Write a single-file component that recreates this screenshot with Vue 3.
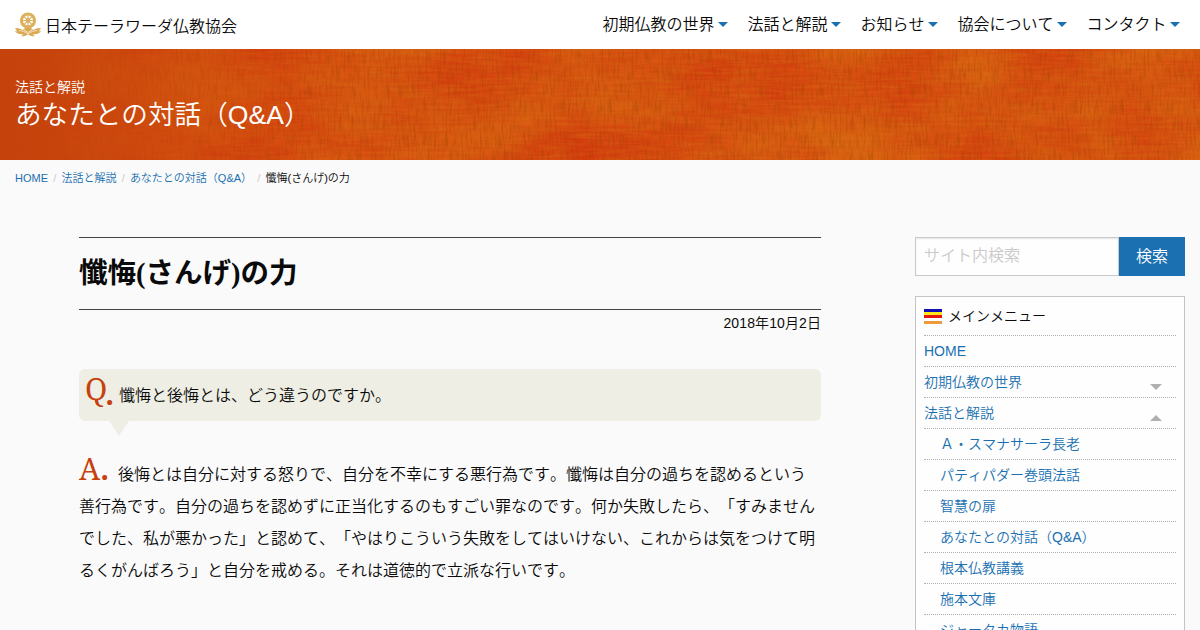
<template>
  <div class="page">
    <header class="top-bar">
      <a class="brand" href="#">
        <svg class="logo" width="28" height="26" viewBox="0 0 28 26">
          <g fill="none" stroke="#dcb05c">
            <circle cx="14" cy="8.5" r="6.6" stroke-width="3" />
            <circle cx="14" cy="8.5" r="1.6" stroke-width="1.6" />
            <path d="M14 2v13M7.5 8.5h13M9.4 3.9l9.2 9.2M18.6 3.9l-9.2 9.2" stroke-width="1.1" />
          </g>
          <path
            d="M1 16.4c3.4-.3 5.6.2 7.600 1.500 1.500-1.700 3-2 5.400-2s3.900.3 5.400 2c2-1.300 4.200-1.800 7.600-1.500-.7 1.300-1.600 2.200-2.800 2.900h3c-2.300 2.500-5.400 3.500-8.700 2.700l2.300 2.300c-2.500.2-4.800-.3-6.800-2-2 1.700-4.300 2.200-6.800 2l2.300-2.300C6.200 22.800 3.100 21.800.8 19.300h3C2.600 18.600 1.700 17.700 1 16.400z"
            fill="#d9a850"
          />
          <path d="M5 18.500c3.500.2 6 1.200 9 3.600 3-2.400 5.500-3.400 9-3.600M9.500 17.500l4.500 3 4.500-3" fill="none" stroke="#fff" stroke-width=".7" />
        </svg>
        <span>日本テーラワーダ仏教協会</span>
      </a>
      <nav class="nav">
        <a v-for="item in navItems" :key="item" class="nav-item" href="#">{{ item }}</a>
      </nav>
    </header>

    <section class="banner">
      <svg class="cloth" width="1200" height="111" preserveAspectRatio="none">
        <defs>
          <filter id="folds" x="0" y="0" width="100%" height="100%" color-interpolation-filters="sRGB">
            <feTurbulence type="fractalNoise" baseFrequency="0.009 0.014" numOctaves="4" seed="8" />
            <feColorMatrix values="0.03 0 0 0 0.825  0.26 0 0 0 0.185  0.02 0 0 0 0.05  0 0 0 0 1" />
          </filter>
          <filter id="warp" x="0" y="0" width="100%" height="100%" color-interpolation-filters="sRGB">
            <feTurbulence type="fractalNoise" baseFrequency="0.5 0.06" numOctaves="3" seed="3" />
            <feColorMatrix values="0 0 0 0 0.6  0 0 0 0 0.25  0 0 0 0 0  0.9 0 0 0 -0.38" />
          </filter>
          <filter id="weft" x="0" y="0" width="100%" height="100%" color-interpolation-filters="sRGB">
            <feTurbulence type="fractalNoise" baseFrequency="0.03 0.35" numOctaves="3" seed="12" />
            <feColorMatrix values="0 0 0 0 0.87  0 0 0 0 0.45  0 0 0 0 0.08  0.7 0 0 0 -0.22" />
          </filter>
          <linearGradient id="shade">
            <stop offset="0" stop-color="#c5420c" />
            <stop offset=".03" stop-color="#c5420c" stop-opacity=".95" />
            <stop offset=".3" stop-color="#d3440d" stop-opacity="0" />
          </linearGradient>
        </defs>
        <rect width="1200" height="111" filter="url(#folds)" />
        <rect width="1200" height="111" filter="url(#weft)" />
        <rect width="1200" height="111" filter="url(#warp)" />
        <rect width="1200" height="111" fill="url(#shade)" />
      </svg>
      <div class="banner-text">
        <p class="banner-sub">法話と解説</p>
        <p class="banner-title">あなたとの対話（Q&amp;A）</p>
      </div>
    </section>

    <ul class="breadcrumbs">
      <li v-for="crumb in crumbs" :key="crumb"><a href="#">{{ crumb }}</a></li>
      <li>懺悔(さんげ)の力</li>
    </ul>

    <div class="columns">
      <main class="article">
        <h1>懺悔(さんげ)の力</h1>
        <time class="date">2018年10月2日</time>
        <div class="question">
          <span class="mark mark-q">Q<i>.</i></span>
          <span>懺悔と後悔とは、どう違うのですか。</span>
        </div>
        <p class="answer"><span class="mark mark-a">A<i>.</i></span>後悔とは自分に対する怒りで、自分を不幸にする悪行為です。懺悔は自分の過ちを認めるという善行為です。自分の過ちを認めずに正当化するのもすごい罪なのです。何か失敗したら、「すみませんでした、私が悪かった」と認めて、「やはりこういう失敗をしてはいけない、これからは気をつけて明るくがんばろう」と自分を戒める。それは道徳的で立派な行いです。</p>
      </main>

      <aside class="side">
        <form class="search" @submit.prevent>
          <input v-model="keyword" type="text" placeholder="サイト内検索" />
          <button type="submit">検索</button>
        </form>
        <div class="menu">
          <div class="menu-title">
            <span class="flag"></span>
            <span>メインメニュー</span>
          </div>
          <a
            v-for="item in menuItems"
            :key="item.label"
            class="menu-item"
            :class="[{ sub: item.sub }, item.arrow]"
            href="#"
          >{{ item.label }}</a>
        </div>
      </aside>
    </div>
  </div>
</template>

<script setup>
import { ref } from 'vue';

const keyword = ref('');

const navItems = ['初期仏教の世界', '法話と解説', 'お知らせ', '協会について', 'コンタクト'];
const crumbs = ['HOME', '法話と解説', 'あなたとの対話（Q&A）'];

const menuItems = [
  { label: 'HOME' },
  { label: '初期仏教の世界', arrow: 'down' },
  { label: '法話と解説', arrow: 'up' },
  { label: 'Ａ・スマナサーラ長老', sub: true },
  { label: 'パティパダー巻頭法話', sub: true },
  { label: '智慧の扉', sub: true },
  { label: 'あなたとの対話（Q&A）', sub: true },
  { label: '根本仏教講義', sub: true },
  { label: '施本文庫', sub: true },
  { label: 'ジャータカ物語', sub: true },
];
</script>

<style>
html,
body {
  background: #fafafa;
  overflow: hidden;
}
</style>

<style scoped>
.page {
  box-sizing: border-box;
  height: 630px;
  overflow: hidden;
  color: #0a0a0a;
  font-family: "Liberation Sans", "Noto Sans CJK JP DemiLight", "Noto Sans CJK JP", sans-serif;
  font-size: 16px;
  font-kerning: none;
  text-spacing-trim: space-all;
}

.page * {
  box-sizing: border-box;
}

a {
  color: #1a70b1;
  text-decoration: none;
}

/* ヘッダー */
.top-bar {
  display: flex;
  justify-content: space-between;
  height: 49px;
  padding: 0 15px 0 14px;
  background: #fff;
}

.brand {
  display: flex;
  align-items: center;
  gap: 3px;
  height: 50px;
  color: #0a0a0a;
}

.nav {
  display: flex;
  align-items: center;
  height: 46px;
}

.nav-item {
  display: flex;
  align-items: center;
  padding-right: 5px;
  margin-left: 14.500px;
  color: #0a0a0a;
  white-space: nowrap;
}

.nav-item::after {
  content: "";
  margin: 2px 0 0 3.500px;
  border: 5.500px solid transparent;
  border-top-color: #1a70b1;
  border-bottom: 0;
}

/* バナー */
.banner {
  position: relative;
  height: 111px;
  background: #d34f10;
  color: #fff;
}

.cloth {
  position: absolute;
  inset: 0;
}

.banner-text {
  position: relative;
  padding: 28px 15px 0;
}

.banner p {
  margin: 0;
}

.banner-sub {
  font-size: 14px;
  line-height: 20px;
}

.banner-title {
  font-size: 26.600px;
  line-height: 37px;
}

/* パンくず */
.breadcrumbs {
  display: flex;
  height: 37px;
  margin: 0;
  padding: 0 15px;
  list-style: none;
  font-size: 11px;
  line-height: 36px;
}

.breadcrumbs li:not(:last-child)::after {
  content: "/";
  margin: 0 5.200px;
  color: #cacaca;
}

/* 本文 */
.columns {
  display: flex;
  justify-content: space-between;
  padding: 40px 15px 0 79px;
}

.article {
  width: 742px;
}

h1 {
  height: 73px;
  margin: 0;
  border-top: 1px solid #444;
  border-bottom: 1px solid #444;
  font-family: "Liberation Serif", "Noto Sans CJK JP", serif;
  font-size: 28.500px;
  font-weight: 700;
  line-height: 72px;
}

.date {
  display: block;
  font-size: 14px;
  letter-spacing: 0.1px;
  line-height: 27px;
  text-align: right;
}

.question {
  position: relative;
  display: flex;
  align-items: center;
  height: 52px;
  margin-top: 32px;
  padding: 0 0 2px 6px;
  border-radius: 6px;
  background: #eeeee4;
}

.question::after {
  content: "";
  position: absolute;
  top: 52px;
  left: 30px;
  border: 10px solid transparent;
  border-top: 15px solid #eeeee4;
  border-bottom: 0;
}

.mark {
  display: inline-block;
  color: #c5420c;
  font-family: "Noto Serif", "Liberation Serif", serif;
  font-size: 30px;
  line-height: 30px;
}

.mark i {
  font-style: normal;
  font-weight: 700;
}

.mark-q {
  width: 34px;
  margin-top: -10px;
  white-space: nowrap;
}

.mark-q i {
  display: inline-block;
  margin-left: -2px;
  transform: translateY(5px);
}

.mark-a {
  width: 39px;
}

.answer {
  margin: 33px 0 0;
  line-height: 32px;
}

/* サイドバー */
.side {
  width: 270px;
}

.search {
  display: flex;
  height: 39px;
  margin-bottom: 20px;
}

.search input {
  flex: 1;
  min-width: 0;
  padding: 0 8px 2px;
  border: 1px solid #cacaca;
  border-radius: 0;
  background: #fefefe;
  box-shadow: inset 0 1px 2px rgba(10, 10, 10, 0.1);
  font: inherit;
}

.search input::placeholder {
  color: #cacaca;
}

.search button {
  width: 66px;
  padding: 0 0 4px;
  border: 0;
  background: #1a70b1;
  color: #fff;
  font: inherit;
}

.menu {
  padding: 0 8px;
  border: 1px solid #c4c4c4;
  background: #fefefe;
  font-size: 14px;
}

.menu-title {
  display: flex;
  align-items: center;
  gap: 6px;
  height: 38px;
}

.menu-title span:last-child {
  padding-bottom: 2px;
}

.flag {
  width: 18px;
  height: 15px;
  background: linear-gradient(#1010b4 3px, #ffe81a 3px 6px, #e8140c 6px 9px, #fff 9px 12px, #ec9a3a 12px);
}

.menu-item {
  display: flex;
  justify-content: space-between;
  height: 31px;
  border-top: 1px dotted #b0b0b0;
  line-height: 31px;
}

.menu-item.sub {
  padding-left: 16px;
}

.down::after,
.up::after {
  content: "";
  align-self: center;
  margin: 10px 14px 0 0;
  border: 6px solid transparent;
}

.down::after {
  border-top-color: #b0b0b0;
  border-bottom: 0;
}

.up::after {
  border-bottom-color: #b0b0b0;
  border-top: 0;
}
</style>
